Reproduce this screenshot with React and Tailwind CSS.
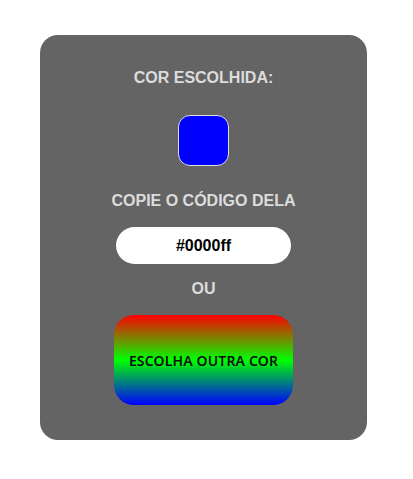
export default function App() {
  return (
    <div className="min-h-screen bg-white pt-[35px]" style={{ fontFamily: '"Liberation Sans", Arial, sans-serif' }}>
      <div className="ml-10 w-[327px] rounded-[18px] bg-[#646464] pt-[34px] pb-[35px] flex flex-col items-center">
        <h2 className="text-base leading-[18px] font-bold text-[#dcdcdc]">COR ESCOLHIDA:</h2>
        <div className="mt-7 h-[51px] w-[51px] rounded-xl border border-[#e0e0e0] bg-[#0000ff]"></div>
        <h2 className="mt-[26px] text-base leading-[18px] font-bold text-[#dcdcdc]">COPIE O CÓDIGO DELA</h2>
        <div className="mt-[17px] h-[37px] w-[175px] rounded-full bg-white flex items-center justify-center text-base font-bold text-black">
          #0000ff
        </div>
        <p className="mt-4 text-base leading-[18px] font-bold text-[#dcdcdc]">OU</p>
        <button
          className="mt-[17px] h-[90px] w-[179px] rounded-[20px] bg-[linear-gradient(to_bottom,#ff0000,#00ff00,#0000ff)] text-[14px] tracking-[0.15px] font-semibold text-[#111]"
          style={{ fontFamily: '"Noto Sans", sans-serif' }}
        >
          ESCOLHA OUTRA COR
        </button>
      </div>
    </div>
  );
}
